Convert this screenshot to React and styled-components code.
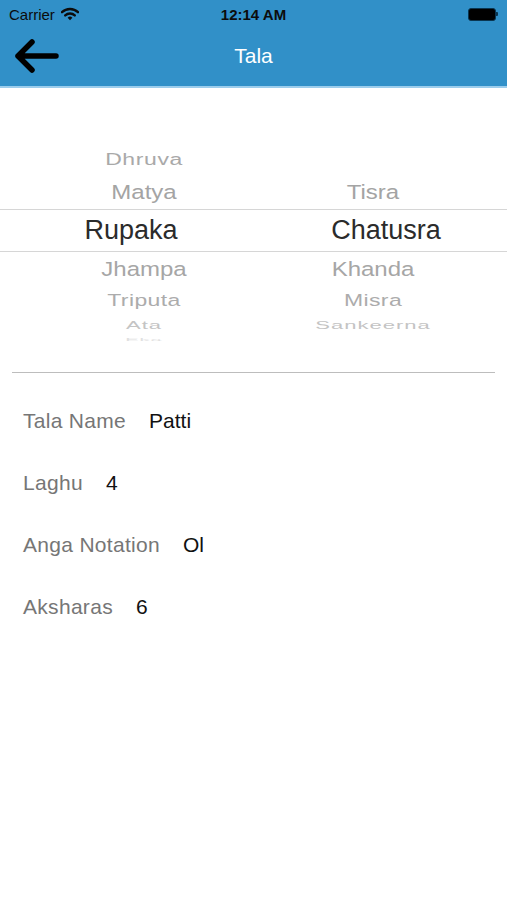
import styled, { createGlobalStyle } from 'styled-components';

const GlobalStyle = createGlobalStyle`
  html, body {
    margin: 0;
    padding: 0;
    background: #ffffff;
  }
  body {
    font-family: 'Liberation Sans', Arial, sans-serif;
  }
`;

const Screen = styled.div`
  width: 507px;
  height: 900px;
  background: #fff;
  overflow: hidden;
`;

const Header = styled.div`
  background: #3190c8;
  height: 88px;
  border-bottom: 2px solid #9ccdec;
  box-sizing: border-box;
`;

const StatusBar = styled.div`
  height: 28px;
  display: grid;
  grid-template-columns: 1fr auto 1fr;
  align-items: center;
  padding: 0 9px;
  color: #0c0c0c;
  font-size: 15px;
`;

const Carrier = styled.div`
  display: flex;
  align-items: center;
  gap: 6px;
`;

const Clock = styled.div`
  font-weight: 700;
  font-size: 15px;
`;

const Battery = styled.div`
  justify-self: end;
  display: flex;
  align-items: center;
`;

const BatteryBody = styled.div`
  width: 26px;
  height: 11px;
  border-radius: 3px;
  background: #000;
  border: 1px solid #0a3550;
`;

const BatteryCap = styled.div`
  width: 2px;
  height: 4px;
  background: #0a3550;
  border-radius: 0 1px 1px 0;
`;

const NavBar = styled.div`
  height: 56px;
  display: grid;
  grid-template-columns: 80px 1fr 80px;
  align-items: center;
`;

const BackButton = styled.div`
  padding-left: 14px;
  display: flex;
  align-items: center;
`;

const Title = styled.div`
  text-align: center;
  color: #fff;
  font-size: 21px;
`;

const Picker = styled.div`
  padding-top: 56px;
  height: 284px;
  box-sizing: border-box;
  overflow: hidden;
`;

const WheelRow = styled.div`
  display: grid;
  grid-template-columns: 288px 170px;
  height: ${(p) => p.$h}px;
  align-items: center;
  border-top: ${(p) => (p.$selected ? '1px solid #d6d6d6' : 'none')};
  border-bottom: ${(p) => (p.$selected ? '1px solid #d6d6d6' : 'none')};
  box-sizing: border-box;
`;

const WheelItem = styled.div`
  text-align: center;
  font-size: ${(p) => p.$size}px;
  color: ${(p) => p.$color};
  transform: translateX(${(p) => p.$shift || 0}px) scaleY(${(p) => p.$scale});
  letter-spacing: ${(p) => p.$spacing || 0}px;
  white-space: nowrap;
  line-height: 1;
`;

const Divider = styled.div`
  margin: 0 12px;
  height: 1px;
  background: #bdbdbd;
`;

const Info = styled.div`
  padding: 17px 23px 0;
  display: flex;
  flex-direction: column;
`;

const InfoRow = styled.div`
  height: 62px;
  display: flex;
  align-items: center;
  gap: 23px;
  font-size: 21px;
`;

const Label = styled.span`
  color: #767676;
  letter-spacing: 0.3px;
`;

const Value = styled.span`
  color: #111;
`;

const wheel = [
  { h: 31, left: 'Dhruva', right: '', size: 23, scale: 0.68, color: '#a9a9a9', spacing: 0.6 },
  { h: 34, left: 'Matya', right: 'Tisra', size: 24, scale: 0.88, color: '#a4a4a4' },
  { h: 43, left: 'Rupaka', right: 'Chatusra', size: 27, scale: 1, color: '#2b2b2b', selected: true },
  { h: 33, left: 'Jhampa', right: 'Khanda', size: 24, scale: 0.88, color: '#a6a6a6' },
  { h: 30, left: 'Triputa', right: 'Misra', size: 23, scale: 0.72, color: '#acacac', spacing: 0.4 },
  { h: 15, left: 'Ata', right: 'Sankeerna', size: 22, scale: 0.48, color: '#c4c4c4', spacing: 1 },
  { h: 8, left: 'Eka', right: '', size: 20, scale: 0.2, color: '#e0e0e0', spacing: 1 },
];

const details = [
  ['Tala Name', 'Patti'],
  ['Laghu', '4'],
  ['Anga Notation', 'Ol'],
  ['Aksharas', '6'],
];

const WifiIcon = () => (
  <svg width="18" height="14" viewBox="0 0 18 14">
    <path d="M1 5.2 A11.5 11.5 0 0 1 17 5.2" stroke="#0c0c0c" strokeWidth="2.4" fill="none" strokeLinecap="round" />
    <path d="M4.2 8.4 A7 7 0 0 1 13.8 8.4" stroke="#0c0c0c" strokeWidth="2.4" fill="none" strokeLinecap="round" />
    <path d="M9 13.2 L6.6 10.8 A3.4 3.4 0 0 1 11.4 10.8 Z" fill="#0c0c0c" />
  </svg>
);

const BackArrow = () => (
  <svg width="48" height="36" viewBox="0 0 48 36">
    <path d="M4 18 H42 M18 4 L4 18 L18 32" stroke="#000" strokeWidth="5.5" fill="none" strokeLinecap="round" strokeLinejoin="round" />
  </svg>
);

const App = () => {
  return (
    <Screen>
      <GlobalStyle />
      <Header>
        <StatusBar>
          <Carrier>
            Carrier
            <WifiIcon />
          </Carrier>
          <Clock>12:14 AM</Clock>
          <Battery>
            <BatteryBody />
            <BatteryCap />
          </Battery>
        </StatusBar>
        <NavBar>
          <BackButton>
            <BackArrow />
          </BackButton>
          <Title>Tala</Title>
          <div />
        </NavBar>
      </Header>
      <Picker>
        {wheel.map((row) => (
          <WheelRow key={row.left} $h={row.h} $selected={row.selected}>
            <WheelItem
              $size={row.size}
              $scale={row.scale}
              $color={row.color}
              $spacing={row.spacing}
              $shift={row.selected ? -13 : 0}
            >
              {row.left}
            </WheelItem>
            <WheelItem
              $size={row.size}
              $scale={row.scale}
              $color={row.color}
              $spacing={row.spacing}
              $shift={row.selected ? 13 : 0}
            >
              {row.right}
            </WheelItem>
          </WheelRow>
        ))}
      </Picker>
      <Divider />
      <Info>
        {details.map(([label, value]) => (
          <InfoRow key={label}>
            <Label>{label}</Label>
            <Value>{value}</Value>
          </InfoRow>
        ))}
      </Info>
    </Screen>
  );
};

export default App;
